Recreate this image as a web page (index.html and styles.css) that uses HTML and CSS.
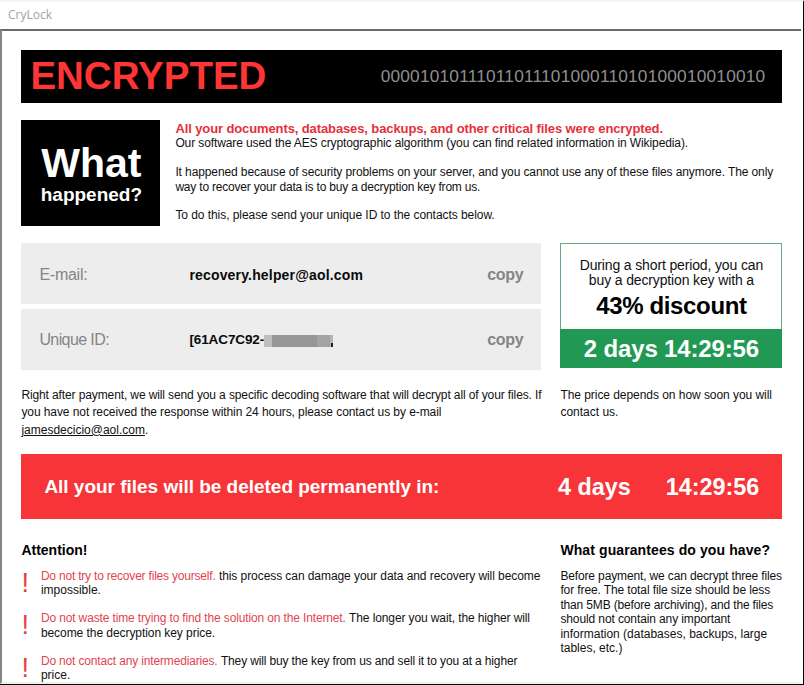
FILE: index.html
```html
<!DOCTYPE html>
<html lang="en">
<head>
<meta charset="utf-8">
<title>CryLock</title>
<link rel="stylesheet" href="styles.css">
</head>
<body>
<div class="window">
  <header class="titlebar"><span>CryLock</span></header>
  <main class="content">
    <section class="banner">
      <h1>ENCRYPTED</h1>
      <span class="bits">0000101011101101110100011010100010010010</span>
    </section>
    <section class="intro">
      <div class="what"><strong>What</strong><span>happened?</span></div>
      <div class="text">
        <b class="t-head">All your documents, databases, backups, and other critical files were encrypted.</b><br>
        <span class="t1">Our software used the AES cryptographic algorithm (you can find related information in Wikipedia).</span><br><br>
        <span class="t2">It happened because of security problems on your server, and you cannot use any of these files anymore. The only</span><br>
        <span class="t3">way to recover your data is to buy a decryption key from us.</span><br><br>
        <span class="t4">To do this, please send your unique ID to the contacts below.</span>
      </div>
    </section>
    <section class="cols contact">
      <div class="fields">
        <div class="field"><label>E-mail:</label><b class="mail">recovery.helper@aol.com</b><span class="copy">copy</span></div>
        <div class="field id-row"><label class="l-id">Unique ID:</label><b class="uid">[61AC7C92-<i class="mask"></i></b><span class="copy">copy</span></div>
      </div>
      <div class="offer">
        <div class="offer-text"><span>During a short period, you can</span><br><span class="o2">buy a decryption key with a</span><strong>43% discount</strong></div>
        <div class="offer-time">2 days 14:29:56</div>
      </div>
    </section>
    <section class="cols notes">
      <p><span class="n1">Right after payment, we will send you a specific decoding software that will decrypt all of your files. If</span><br><span class="n2">you have not received the response within 24 hours, please contact us by e-mail</span><br><span class="n3"><u>jamesdecicio@aol.com</u>.</span></p>
      <p class="price"><span class="p1">The price depends on how soon you will</span><br><span class="p2">contact us.</span></p>
    </section>
    <section class="deadline">
      <span class="msg">All your files will be deleted permanently in:</span>
      <span class="days">4 days</span>
      <span class="time">14:29:56</span>
    </section>
    <section class="cols info">
      <div>
        <h2>Attention!</h2>
        <div class="warn"><i>!</i><p><em class="w1">Do not try to recover files yourself.</em> <span class="w2">this process can damage your data and recovery will become</span><br>impossible.</p></div>
        <div class="warn"><i>!</i><p><em class="w3">Do not waste time trying to find the solution on the Internet.</em> <span class="w4">The longer you wait, the higher will</span><br><span class="w5">become the decryption key price.</span></p></div>
        <div class="warn"><i>!</i><p><em class="w6">Do not contact any intermediaries.</em> <span class="w7">They will buy the key from us and sell it to you at a higher</span><br>price.</p></div>
      </div>
      <div>
        <h2 class="h-g">What guarantees do you have?</h2>
        <p class="guar"><span class="g1">Before payment, we can decrypt three files</span><br><span class="g2">for free. The total file size should be less</span><br><span class="g3">than 5MB (before archiving), and the files</span><br><span class="g4">should not contain any important</span><br><span class="g5">information (databases, backups, large</span><br><span class="g6">tables, etc.)</span></p>
      </div>
    </section>
  </main>
</div>
</body>
</html>
```
FILE: styles.css
```css
* { box-sizing: border-box; margin: 0; padding: 0; }
body { width: 804px; height: 685px; overflow: hidden; background: #fff; font: 12px/14.4px "Liberation Sans", Arial, sans-serif; color: #111; white-space: nowrap; }
.window { width: 804px; height: 685px; display: flex; flex-direction: column; overflow: hidden; border-right: 1px solid #000; border-bottom: 1px solid #000; border-top: 2px solid #f5f5f5; }
.titlebar { height: 27px; padding: 5px 0 0 8px; color: #a3a3a3; font: 12px/16px "Open Sans", sans-serif; }
.content { flex: 1; min-height: 0; margin-right: 2px; padding: 19px 19px 0 19.4px; border-top: 2px solid #6b6b6b; border-left: 2px solid #858585; border-bottom: 2px solid #eee; border-right: 0; overflow: hidden; }
.banner { width: 761px; height: 53px; background: #000; display: flex; align-items: center; justify-content: space-between; padding: 0 17px 0 9px; }
.banner h1 { font-size: 38.5px; line-height: 51px; height: 53px; color: #fe3535; }
.bits { color: #8f8f8f; font-size: 17.3px; letter-spacing: 0.2px; }
.intro { display: flex; gap: 15px; margin-top: 17px; height: 106px; }
.what { flex: none; width: 139px; background: #000; color: #fff; display: flex; flex-direction: column; align-items: center; padding: 22px 0 0 1px; }
.what strong { font-size: 41px; line-height: 43px; }
.what span { font-size: 19px; font-weight: bold; line-height: 19px; }
.text { padding-top: 2px; }
.t-head { color: #e4303a; font-size: 13px; letter-spacing: -0.11px; }
.t1, .t2 { letter-spacing: -0.105px; }
.t3 { letter-spacing: -0.2px; }
.t4 { letter-spacing: -0.06px; }
.cols { display: grid; grid-template-columns: 520px 222px; column-gap: 19px; }
.contact { margin-top: 17px; }
.fields { display: grid; gap: 5px; }
.field { height: 61px; background: #ededed; display: grid; grid-template-columns: 150px 1fr auto; align-items: center; padding: 2px 18px 0; line-height: 18px; }
.id-row { padding-top: 0; }
.field label { font-size: 16px; color: #858585; letter-spacing: -0.25px; }
.field .l-id { letter-spacing: -0.6px; }
.field b { font-size: 13.5px; color: #0a0a0a; }
.field .mail { font-size: 14px; letter-spacing: 0.17px; }
.field .uid { display: flex; align-items: center; letter-spacing: -0.1px; }
.mask { width: 69px; height: 12px; margin-top: 2px; background: linear-gradient(#222, #222) 100% 100% / 2px 4px no-repeat, linear-gradient(90deg, #bdbdbd 0 8px, #969696 8px 53px, #a3a3a3 53px 66px, #b5b5b5 66px); }
.copy { color: #858585; font-size: 16px; font-weight: bold; letter-spacing: -0.3px; }
.offer { height: 125px; width: 222px; border: 1px solid #63ad85; display: flex; flex-direction: column; text-align: center; }
.offer-text { flex: 1; padding-top: 14px; font-size: 14px; line-height: 15px; letter-spacing: -0.14px; }
.offer-text strong { display: block; font-size: 24px; line-height: 28px; margin-top: 4px; color: #000; letter-spacing: -0.35px; }
.offer-time { margin: 0 -1px -1px; height: 39px; background: #219955; color: #fff; font-size: 24px; font-weight: bold; line-height: 39px; letter-spacing: -0.15px; }
.notes { margin-top: 17px; line-height: 17.4px; height: 67px; }
.n1 { letter-spacing: -0.115px; }
.n2 { letter-spacing: -0.08px; }
.p1 { letter-spacing: -0.05px; }
.deadline { width: 761px; height: 65px; background: #f73539; color: #fff; font-weight: bold; display: flex; align-items: center; padding: 2px 23px 0; }
.msg { font-size: 19px; flex: 1; letter-spacing: -0.02px; }
.days, .time { font-size: 23.4px; }
.time { margin-left: 35px; }
.info { margin-top: 22px; }
.info h2 { font-size: 14px; line-height: 18px; color: #000; }
.info .h-g { letter-spacing: 0.1px; }
.warn { display: flex; height: 42.3px; }
.warn i { flex: none; width: 19.5px; font-style: normal; font-size: 27px; line-height: 29px; color: #ea4045; }
.info h2 + * { margin-top: 10px; }
em { font-style: normal; color: #e34450; }
.w1 { letter-spacing: -0.2px; }
.w2 { letter-spacing: -0.07px; }
.w3, .w7, .g1 { letter-spacing: -0.14px; }
.w4, .g2, .g4 { letter-spacing: -0.11px; }
.w5 { letter-spacing: -0.06px; }
.w6, .g3 { letter-spacing: -0.16px; }
```
